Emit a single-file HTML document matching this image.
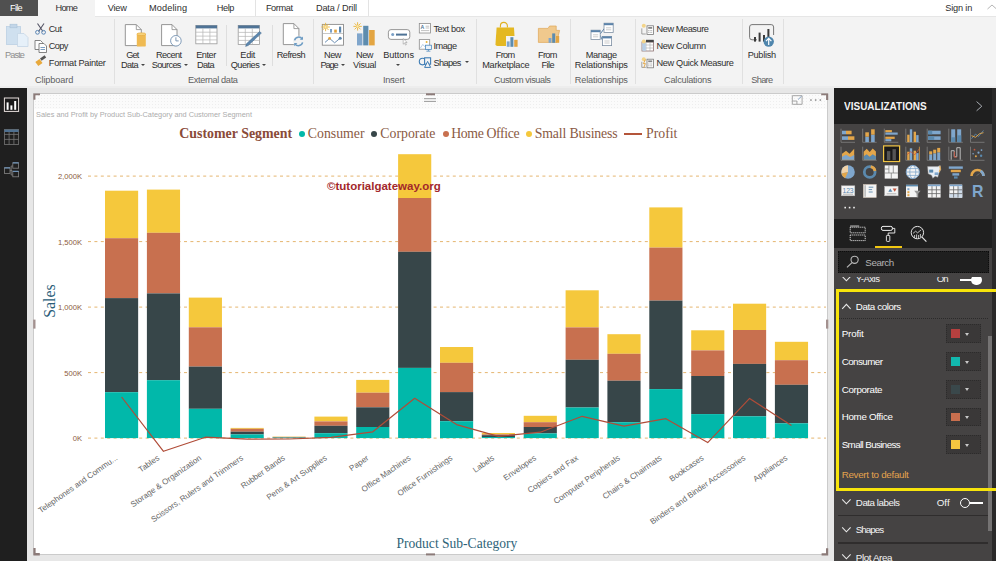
<!DOCTYPE html>
<html><head><meta charset="utf-8">
<style>
*{box-sizing:border-box;margin:0;padding:0}
html,body{width:996px;height:561px;overflow:hidden;background:#e6e6e6;font-family:"Liberation Sans",sans-serif;}
.abs{position:absolute}
#tabs{position:absolute;left:0;top:0;width:996px;height:16px;background:#fff}
#ribbon{position:absolute;left:0;top:16px;width:996px;height:72px;background:#f3f3f3;border-bottom:2px solid #ededed}
#side{position:absolute;left:0;top:88px;width:27px;height:473px;background:#1f1f1f}
#canvas{position:absolute;left:27px;top:88px;width:807px;height:473px;background:#e7e7e7}
#visual{position:absolute;left:33px;top:93px;width:795px;height:462px;background:#fff;border:1px solid #cbcbcb}
#panel{position:absolute;left:834px;top:88px;width:162px;height:473px;background:#454343;overflow:hidden}
.t{position:absolute;white-space:nowrap;line-height:1}
.rt{position:absolute;white-space:nowrap;line-height:1;font-size:10.2px;color:#333}
.rg{position:absolute;white-space:nowrap;line-height:1;font-size:10.2px;color:#555}
.sep{position:absolute;width:1px;background:#dcdcdc;top:22px;height:60px}
</style></head><body>
<div id="tabs">
  <div class="abs" style="left:0;top:0;width:37.6px;height:16px;background-color:#505050;background-image:radial-gradient(#3c3c3c 0.55px,transparent 0.65px);background-size:2px 2px"></div>
  <div class="abs" style="left:37.6px;top:0;width:57.8px;height:17px;background:#f3f3f3"></div>
</div>
<div id="ribbon"></div>
<div class="abs" style="left:95.4px;top:16px;width:901px;height:1px;background:#e6e6e6"></div>
<div class="t" style="left:10.0px;top:4.2px;font-size:9.2px;letter-spacing:-0.71px;color:#fff;font-family:'Liberation Sans',sans-serif;">File</div>
<div class="t" style="left:55.6px;top:4.2px;font-size:9.2px;letter-spacing:-0.75px;color:#2e2e2e;font-family:'Liberation Sans',sans-serif;">Home</div>
<div class="t" style="left:107.8px;top:4.2px;font-size:9.2px;letter-spacing:-0.22px;color:#2e2e2e;font-family:'Liberation Sans',sans-serif;">View</div>
<div class="t" style="left:149.0px;top:4.2px;font-size:9.2px;letter-spacing:0.11px;color:#2e2e2e;font-family:'Liberation Sans',sans-serif;">Modeling</div>
<div class="t" style="left:216.7px;top:4.2px;font-size:9.2px;letter-spacing:-0.37px;color:#2e2e2e;font-family:'Liberation Sans',sans-serif;">Help</div>
<div class="t" style="left:265.9px;top:4.2px;font-size:9.2px;letter-spacing:-0.41px;color:#2e2e2e;font-family:'Liberation Sans',sans-serif;">Format</div>
<div class="t" style="left:315.9px;top:4.2px;font-size:9.2px;letter-spacing:-0.15px;color:#2e2e2e;font-family:'Liberation Sans',sans-serif;">Data / Drill</div>
<div class="t" style="left:945.2px;top:4.2px;font-size:9.2px;letter-spacing:-0.17px;color:#2e2e2e;font-family:'Liberation Sans',sans-serif;">Sign in</div>
<div class="abs" style="left:255px;top:0;width:1px;height:16px;background:#e3e3e3"></div>
<div class="abs" style="left:368px;top:0;width:1px;height:16px;background:#e3e3e3"></div>
<svg class="abs" style="left:986px;top:3px" width="10" height="8" viewBox="0 0 10 8"><path d="M1.5 6 L6 2 L10.5 6" fill="none" stroke="#b5b5b5" stroke-width="1"/></svg>
<div class="t" style="left:5.1px;top:51.0px;font-size:9.2px;letter-spacing:-0.91px;color:#8e8e8e;font-family:'Liberation Sans',sans-serif;">Paste</div>
<div class="t" style="left:48.8px;top:24.9px;font-size:9.2px;letter-spacing:-0.56px;color:#2e2e2e;font-family:'Liberation Sans',sans-serif;">Cut</div>
<div class="t" style="left:48.8px;top:42.0px;font-size:9.2px;letter-spacing:-0.63px;color:#2e2e2e;font-family:'Liberation Sans',sans-serif;">Copy</div>
<div class="t" style="left:48.8px;top:58.6px;font-size:9.2px;letter-spacing:-0.28px;color:#2e2e2e;font-family:'Liberation Sans',sans-serif;">Format Painter</div>
<div class="t" style="left:35.0px;top:76.4px;font-size:9.2px;letter-spacing:-0.12px;color:#5e5e5e;font-family:'Liberation Sans',sans-serif;">Clipboard</div>
<div class="abs" style="left:114.3px;top:19px;width:1px;height:65px;background:#e0e0e0"></div>
<div class="t" style="left:126.3px;top:51.0px;font-size:9.2px;letter-spacing:-0.86px;color:#2e2e2e;font-family:'Liberation Sans',sans-serif;">Get</div>
<div class="t" style="left:121.0px;top:61.0px;font-size:9.2px;letter-spacing:-0.58px;color:#2e2e2e;font-family:'Liberation Sans',sans-serif;">Data</div>
<div class="abs" style="left:141.2px;top:63.8px;width:0;height:0;border-left:2.2px solid transparent;border-right:2.2px solid transparent;border-top:2.6px solid #444"></div>
<div class="t" style="left:156.1px;top:51.0px;font-size:9.2px;letter-spacing:-0.61px;color:#2e2e2e;font-family:'Liberation Sans',sans-serif;">Recent</div>
<div class="t" style="left:151.7px;top:61.0px;font-size:9.2px;letter-spacing:-0.66px;color:#2e2e2e;font-family:'Liberation Sans',sans-serif;">Sources</div>
<div class="abs" style="left:184.0px;top:63.8px;width:0;height:0;border-left:2.2px solid transparent;border-right:2.2px solid transparent;border-top:2.6px solid #444"></div>
<div class="t" style="left:196.2px;top:51.0px;font-size:9.2px;letter-spacing:-0.47px;color:#2e2e2e;font-family:'Liberation Sans',sans-serif;">Enter</div>
<div class="t" style="left:196.9px;top:61.0px;font-size:9.2px;letter-spacing:-0.54px;color:#2e2e2e;font-family:'Liberation Sans',sans-serif;">Data</div>
<div class="abs" style="left:225.8px;top:24.7px;width:1px;height:41px;background:#dedede"></div>
<div class="t" style="left:240.3px;top:51.0px;font-size:9.2px;letter-spacing:-0.25px;color:#2e2e2e;font-family:'Liberation Sans',sans-serif;">Edit</div>
<div class="t" style="left:230.7px;top:61.0px;font-size:9.2px;letter-spacing:-0.52px;color:#2e2e2e;font-family:'Liberation Sans',sans-serif;">Queries</div>
<div class="abs" style="left:262.0px;top:63.8px;width:0;height:0;border-left:2.2px solid transparent;border-right:2.2px solid transparent;border-top:2.6px solid #444"></div>
<div class="abs" style="left:272.1px;top:24.7px;width:1px;height:41px;background:#dedede"></div>
<div class="t" style="left:276.8px;top:51.0px;font-size:9.2px;letter-spacing:-0.57px;color:#2e2e2e;font-family:'Liberation Sans',sans-serif;">Refresh</div>
<div class="t" style="left:188.0px;top:76.4px;font-size:9.2px;letter-spacing:-0.35px;color:#5e5e5e;font-family:'Liberation Sans',sans-serif;">External data</div>
<div class="abs" style="left:313.3px;top:19px;width:1px;height:65px;background:#e0e0e0"></div>
<div class="t" style="left:324.0px;top:51.0px;font-size:9.2px;letter-spacing:-0.50px;color:#2e2e2e;font-family:'Liberation Sans',sans-serif;">New</div>
<div class="t" style="left:320.4px;top:61.0px;font-size:9.2px;letter-spacing:-1.06px;color:#2e2e2e;font-family:'Liberation Sans',sans-serif;">Page</div>
<div class="abs" style="left:341.2px;top:63.8px;width:0;height:0;border-left:2.2px solid transparent;border-right:2.2px solid transparent;border-top:2.6px solid #444"></div>
<div class="t" style="left:356.1px;top:51.0px;font-size:9.2px;letter-spacing:-0.50px;color:#2e2e2e;font-family:'Liberation Sans',sans-serif;">New</div>
<div class="t" style="left:353.0px;top:61.0px;font-size:9.2px;letter-spacing:-0.30px;color:#2e2e2e;font-family:'Liberation Sans',sans-serif;">Visual</div>
<div class="t" style="left:383.3px;top:51.0px;font-size:9.2px;letter-spacing:-0.08px;color:#2e2e2e;font-family:'Liberation Sans',sans-serif;">Buttons</div>
<div class="abs" style="left:396.2px;top:63.8px;width:0;height:0;border-left:2.2px solid transparent;border-right:2.2px solid transparent;border-top:2.6px solid #444"></div>
<div class="t" style="left:433.4px;top:24.9px;font-size:9.2px;letter-spacing:-0.37px;color:#2e2e2e;font-family:'Liberation Sans',sans-serif;">Text box</div>
<div class="t" style="left:433.4px;top:42.0px;font-size:9.2px;letter-spacing:-0.47px;color:#2e2e2e;font-family:'Liberation Sans',sans-serif;">Image</div>
<div class="t" style="left:433.4px;top:58.6px;font-size:9.2px;letter-spacing:-0.62px;color:#2e2e2e;font-family:'Liberation Sans',sans-serif;">Shapes</div>
<div class="abs" style="left:465.3px;top:61.4px;width:0;height:0;border-left:2.2px solid transparent;border-right:2.2px solid transparent;border-top:2.6px solid #444"></div>
<div class="t" style="left:382.9px;top:76.4px;font-size:9.2px;letter-spacing:-0.20px;color:#5e5e5e;font-family:'Liberation Sans',sans-serif;">Insert</div>
<div class="abs" style="left:476.4px;top:19px;width:1px;height:65px;background:#e0e0e0"></div>
<div class="t" style="left:495.8px;top:51.0px;font-size:9.2px;letter-spacing:-0.69px;color:#2e2e2e;font-family:'Liberation Sans',sans-serif;">From</div>
<div class="t" style="left:482.2px;top:61.0px;font-size:9.2px;letter-spacing:-0.26px;color:#2e2e2e;font-family:'Liberation Sans',sans-serif;">Marketplace</div>
<div class="t" style="left:538.0px;top:51.0px;font-size:9.2px;letter-spacing:-0.69px;color:#2e2e2e;font-family:'Liberation Sans',sans-serif;">From</div>
<div class="t" style="left:541.4px;top:61.0px;font-size:9.2px;letter-spacing:-0.57px;color:#2e2e2e;font-family:'Liberation Sans',sans-serif;">File</div>
<div class="t" style="left:494.0px;top:76.4px;font-size:9.2px;letter-spacing:-0.41px;color:#5e5e5e;font-family:'Liberation Sans',sans-serif;">Custom visuals</div>
<div class="abs" style="left:569.5px;top:19px;width:1px;height:65px;background:#e0e0e0"></div>
<div class="t" style="left:585.8px;top:51.0px;font-size:9.2px;letter-spacing:-0.37px;color:#2e2e2e;font-family:'Liberation Sans',sans-serif;">Manage</div>
<div class="t" style="left:574.8px;top:61.0px;font-size:9.2px;letter-spacing:-0.17px;color:#2e2e2e;font-family:'Liberation Sans',sans-serif;">Relationships</div>
<div class="t" style="left:574.8px;top:76.4px;font-size:9.2px;letter-spacing:-0.17px;color:#5e5e5e;font-family:'Liberation Sans',sans-serif;">Relationships</div>
<div class="abs" style="left:635.3px;top:19px;width:1px;height:65px;background:#e0e0e0"></div>
<div class="t" style="left:656.5px;top:24.9px;font-size:9.2px;letter-spacing:-0.42px;color:#2e2e2e;font-family:'Liberation Sans',sans-serif;">New Measure</div>
<div class="t" style="left:656.5px;top:42.0px;font-size:9.2px;letter-spacing:-0.33px;color:#2e2e2e;font-family:'Liberation Sans',sans-serif;">New Column</div>
<div class="t" style="left:656.5px;top:58.6px;font-size:9.2px;letter-spacing:-0.33px;color:#2e2e2e;font-family:'Liberation Sans',sans-serif;">New Quick Measure</div>
<div class="t" style="left:664.1px;top:76.4px;font-size:9.2px;letter-spacing:-0.24px;color:#5e5e5e;font-family:'Liberation Sans',sans-serif;">Calculations</div>
<div class="abs" style="left:742.4px;top:19px;width:1px;height:65px;background:#e0e0e0"></div>
<div class="t" style="left:747.7px;top:51.0px;font-size:9.2px;letter-spacing:-0.28px;color:#2e2e2e;font-family:'Liberation Sans',sans-serif;">Publish</div>
<div class="t" style="left:751.3px;top:76.4px;font-size:9.2px;letter-spacing:-0.69px;color:#5e5e5e;font-family:'Liberation Sans',sans-serif;">Share</div>
<div class="abs" style="left:783.4px;top:19px;width:1px;height:65px;background:#e0e0e0"></div>
<svg class="abs" style="left:0;top:0" width="996" height="90" viewBox="0 0 996 90" shape-rendering="auto">
<rect x="6.5" y="26.5" width="14" height="18" fill="#cfe0ef" stroke="#bcd0e3" stroke-width="0.8"/>
<rect x="10" y="24.2" width="7" height="3.6" fill="#c3d6e8" stroke="#a9c2d8" stroke-width="0.6"/>
<path d="M17.5 33.5 h6.5 l4 4 v9 h-10.5z" fill="#e6f0f9" stroke="#c5d6e6" stroke-width="0.8"/>
<path d="M37.5 23.5 L43 31.5 M44 23.5 L38.5 31.5" stroke="#556" stroke-width="1.1" fill="none"/>
<circle cx="37.5" cy="32.3" r="1.9" fill="none" stroke="#5b86b5" stroke-width="1"/><circle cx="43.6" cy="32.3" r="1.9" fill="none" stroke="#5b86b5" stroke-width="1"/>
<path d="M35 40.5 h5.5 l2 2 v7 h-7.5z" fill="#fdfdfd" stroke="#777" stroke-width="0.9"/>
<path d="M39 43.5 h5 l2.5 2.5 v6.5 h-7.5z" fill="#fdfdfd" stroke="#777" stroke-width="0.9"/>
<path d="M40.5 47.5 h4.5 M40.5 49.5 h4.5" stroke="#5b86b5" stroke-width="0.8"/>
<path d="M35.3 62 l4.2 -3 l3 4 l-4.2 3z" fill="#e8a93c"/><path d="M40 58.5 l4.6 -3.2 l1.6 2.2 l-4.6 3.2z" fill="#555"/>
<path d="M125.3 24.6 h11 l5 5 v16 h-16z" fill="#fff" stroke="#8a8a8a" stroke-width="0.9"/><path d="M136.3 24.6 v5 h5" fill="none" stroke="#8a8a8a" stroke-width="0.8"/>
<rect x="136.8" y="33.6" width="9" height="13" rx="1.2" fill="#efba52"/><ellipse cx="141.3" cy="34.2" rx="4.5" ry="1.4" fill="#f6d27c" stroke="#e2a12e" stroke-width="0.5"/>
<path d="M161.6 24.6 h10.4 l5 5 v16 h-15.4z" fill="#fff" stroke="#8a8a8a" stroke-width="0.9"/><path d="M172.0 24.6 v5 h5" fill="none" stroke="#8a8a8a" stroke-width="0.8"/>
<circle cx="175.9" cy="40.8" r="5.3" fill="#fff" stroke="#7f9bb8" stroke-width="1"/><path d="M175.9 37.3 v3.6 h2.8" fill="none" stroke="#6f8cab" stroke-width="0.9"/>
<rect x="195.8" y="25.4" width="21.2" height="18.4" fill="#fff" stroke="#9a9a9a" stroke-width="0.8"/><rect x="195.8" y="25.4" width="21.2" height="3" fill="#4f7396"/><path d="M195.8 32.2 h21.2" stroke="#b5b5b5" stroke-width="0.7"/><path d="M195.8 36.1 h21.2" stroke="#b5b5b5" stroke-width="0.7"/><path d="M195.8 39.9 h21.2" stroke="#b5b5b5" stroke-width="0.7"/><path d="M202.9 28.4 v15.399999999999999" stroke="#b5b5b5" stroke-width="0.7"/><path d="M209.9 28.4 v15.399999999999999" stroke="#b5b5b5" stroke-width="0.7"/>
<rect x="238.2" y="25.4" width="21.2" height="19" fill="#fff" stroke="#9a9a9a" stroke-width="0.8"/><rect x="238.2" y="25.4" width="21.2" height="3" fill="#4f7396"/><path d="M238.2 32.4 h21.2" stroke="#b5b5b5" stroke-width="0.7"/><path d="M238.2 36.4 h21.2" stroke="#b5b5b5" stroke-width="0.7"/><path d="M238.2 40.4 h21.2" stroke="#b5b5b5" stroke-width="0.7"/><path d="M245.3 28.4 v16" stroke="#b5b5b5" stroke-width="0.7"/><path d="M252.3 28.4 v16" stroke="#b5b5b5" stroke-width="0.7"/>
<path d="M259.6 31.5 l1.8 1.6 l-13.2 12.4 l-2.6 0.9 l0.8 -2.6z" fill="#5c86ad" stroke="#456c91" stroke-width="0.5"/>
<path d="M283.3 23.6 h10.6 l5 5 v16 h-15.6z" fill="#fff" stroke="#8a8a8a" stroke-width="0.9"/><path d="M293.90000000000003 23.6 v5 h5" fill="none" stroke="#8a8a8a" stroke-width="0.8"/>
<circle cx="298.6" cy="41.4" r="5.6" fill="#f3f3f3"/><path d="M294.6 40.4 a4.2 4.2 0 0 1 7.6 -1.4" fill="none" stroke="#6d9cc4" stroke-width="1.5"/><path d="M302.6 42.4 a4.2 4.2 0 0 1 -7.6 1.4" fill="none" stroke="#6d9cc4" stroke-width="1.5"/><path d="M303 36.5 v3.2 h-3.2z M294.2 46.3 v-3.2 h3.2z" fill="#6d9cc4"/>
<rect x="322.3" y="24.4" width="21.2" height="20.8" fill="#fff" stroke="#8c8c8c" stroke-width="0.9"/>
<path d="M323 33.5 h20" stroke="#b0b0b0" stroke-width="0.7"/>
<rect x="330" y="29" width="2" height="3.6" fill="#7aa0c6"/><rect x="334.2" y="29.6" width="2.6" height="3" fill="#e2a13a"/><rect x="339" y="26.6" width="2.2" height="6" fill="#5c86ad"/>
<path d="M325 42.4 l4.6 -4 l5 4.4 l5.6 -4.6" fill="none" stroke="#6c8fb3" stroke-width="1"/><circle cx="329.6" cy="38.4" r="1.4" fill="#e2a13a"/><circle cx="340.2" cy="38.2" r="1.5" fill="#5c86ad"/>
<path d="M327.0 27.0 L329.8 27.0 M326.6 28.0 L328.6 30.0 M325.6 28.4 L325.6 31.2 M324.6 28.0 L322.6 30.0 M324.2 27.0 L321.4 27.0 M324.6 26.0 L322.6 24.0 M325.6 25.6 L325.6 22.8 M326.6 26.0 L328.6 24.0 " stroke="#e9b43a" stroke-width="0.9" fill="none"/><circle cx="325.6" cy="27" r="1.5" fill="#fbe6a6" stroke="#e9b43a" stroke-width="0.5"/>
<rect x="357" y="33.4" width="5.4" height="12" fill="#80a6cc"/><rect x="363.2" y="25.8" width="5.2" height="19.6" fill="#5d8cae"/><rect x="369.1" y="30" width="5.6" height="15.4" fill="#e3a542"/>
<path d="M359.0 26.4 L361.8 26.4 M358.6 27.4 L360.6 29.4 M357.6 27.8 L357.6 30.6 M356.6 27.4 L354.6 29.4 M356.2 26.4 L353.4 26.4 M356.6 25.4 L354.6 23.4 M357.6 25.0 L357.6 22.2 M358.6 25.4 L360.6 23.4 " stroke="#e9b43a" stroke-width="0.9" fill="none"/><circle cx="357.6" cy="26.4" r="1.5" fill="#fbe6a6" stroke="#e9b43a" stroke-width="0.5"/>
<rect x="388.4" y="29.6" width="21.4" height="9.8" rx="2.6" fill="#fff" stroke="#8c8c8c" stroke-width="0.9"/><circle cx="392.7" cy="34.6" r="1.5" fill="#7aa0c6"/><rect x="396" y="33.6" width="11" height="2" fill="#4f7396"/>
<path d="M403.2 38.6 l0 5.6 l1.3 -1.3 l1 2.2 l0.9 -0.4 l-1 -2.2 l1.8 0z" fill="#fff" stroke="#888" stroke-width="0.5"/>
<rect x="419.3" y="23.4" width="11.2" height="9.6" fill="#fff" stroke="#8c8c8c" stroke-width="0.8"/><text x="420.6" y="29.2" font-size="5.2" font-family="Liberation Sans" font-weight="bold" fill="#4f7396">A</text><path d="M425.6 26.2 h3.6 M425.6 28 h3.6 M421 30.6 h8.2" stroke="#999" stroke-width="0.6"/>
<rect x="419.3" y="39.6" width="10.4" height="9.6" fill="#fff" stroke="#8c8c8c" stroke-width="0.8"/><circle cx="426.6" cy="42" r="1" fill="#e9b43a"/><path d="M420.4 48 l2.4 -3.6 l2 2.4" fill="none" stroke="#9db9d4" stroke-width="0.7"/><rect x="425.4" y="45.2" width="6" height="4.2" fill="#eaf2fa" stroke="#4f8bc0" stroke-width="0.8"/><path d="M428.4 49.4 v1.6 M426.4 51.2 h4" stroke="#4f8bc0" stroke-width="0.8"/>
<circle cx="422.6" cy="61.6" r="3.3" fill="none" stroke="#3f7db5" stroke-width="1.1"/><rect x="424.6" y="57.8" width="6" height="6.4" fill="#f3f3f3" stroke="#3f7db5" stroke-width="1.1"/><path d="M427.6 61.4 l-3 6 h6z" fill="#f3f3f3" stroke="#3f7db5" stroke-width="1"/>
<path d="M500.4 27.6 v-1.6 a3.5 3.6 0 0 1 7 0 v1.6" fill="none" stroke="#e0b020" stroke-width="1.1"/>
<path d="M496.6 27.4 h17.4 l1 16.6 q0 2 -2 2 h-15.6 q-2 0 -1.9 -2z" fill="#e4b822"/>
<rect x="506" y="36" width="12.6" height="11.4" fill="#f3f3f3"/><rect x="506.8" y="41.4" width="2.8" height="5.4" fill="#80a6cc"/><rect x="510.4" y="37.2" width="3" height="9.6" fill="#5d8cae"/><rect x="514.2" y="39.8" width="3.4" height="7" fill="#e3a542"/>
<path d="M538.4 42.4 v-14 h9.6 l1.6 -2.4 h6.6 v4.4 h3.4 l-3 12z" fill="#f0c98d" stroke="#e0a656" stroke-width="0.7"/>
<rect x="548.6" y="38" width="2.8" height="4.8" fill="#80a6cc"/><rect x="552.2" y="33.4" width="3" height="9.4" fill="#5d8cae"/><rect x="556" y="36" width="3.2" height="6.8" fill="#e3a542"/>
<path d="M600.2 34 l4 -5.4 M600.2 35.4 l2.4 5" stroke="#5b83aa" stroke-width="1"/>
<rect x="591" y="30.2" width="9.2" height="9.2" fill="#fff" stroke="#7d8fa3" stroke-width="0.8"/><rect x="591" y="30.2" width="9.2" height="2" fill="#5b83aa"/><path d="M593 34.8 h5.199999999999999 M593 36.8 h5.199999999999999" stroke="#aaa" stroke-width="0.6"/>
<rect x="604" y="23.2" width="9.2" height="9.2" fill="#fff" stroke="#7d8fa3" stroke-width="0.8"/><rect x="604" y="23.2" width="9.2" height="2" fill="#5b83aa"/><path d="M606 27.799999999999997 h5.199999999999999 M606 29.799999999999997 h5.199999999999999" stroke="#aaa" stroke-width="0.6"/>
<rect x="602.4" y="36.4" width="9.2" height="9.2" fill="#fff" stroke="#7d8fa3" stroke-width="0.8"/><rect x="602.4" y="36.4" width="9.2" height="2" fill="#5b83aa"/><path d="M604.4 41.0 h5.199999999999999 M604.4 43.0 h5.199999999999999" stroke="#aaa" stroke-width="0.6"/>
<path d="M641.8 28.4 v5.6 h4" fill="none" stroke="#8c8c8c" stroke-width="0.8"/><rect x="647.0" y="25.799999999999997" width="6.4" height="8.6" fill="#fff" stroke="#777" stroke-width="0.8"/><rect x="648.1999999999999" y="27.0" width="4" height="1.8" fill="#888"/><path d="M648.1999999999999 30.599999999999998 h4 M648.1999999999999 32.4 h4" stroke="#999" stroke-width="0.8" stroke-dasharray="1 0.5"/><circle cx="643.8" cy="25.799999999999997" r="2" fill="#f3d489"/>
<rect x="642" y="42" width="11.6" height="9" fill="#fff" stroke="#8c7070" stroke-width="0.8"/><rect x="646" y="39.8" width="7.8" height="2.4" fill="#444"/><path d="M642 45 h11.6 M642 48 h11.6 M646 42 v9 M650 42 v9" stroke="#aaa" stroke-width="0.6"/><rect x="642.4" y="42.4" width="3.4" height="8.4" fill="#b7cfe6"/><circle cx="643.8" cy="41.6" r="2" fill="#f3d489"/>
<path d="M641.8 61.8 v5.6 h4" fill="none" stroke="#8c8c8c" stroke-width="0.8"/><rect x="647.0" y="59.199999999999996" width="6.4" height="8.6" fill="#fff" stroke="#777" stroke-width="0.8"/><rect x="648.1999999999999" y="60.4" width="4" height="1.8" fill="#888"/><path d="M648.1999999999999 64.0 h4 M648.1999999999999 65.8 h4" stroke="#999" stroke-width="0.8" stroke-dasharray="1 0.5"/><circle cx="643.8" cy="59.199999999999996" r="2" fill="#f3d489"/>
<path d="M645.4 59.6 l-2 4 h2 l-1.6 4" fill="none" stroke="#e2a13a" stroke-width="0.9"/>
<path d="M757 39.8 h-5 q-2.4 0 -2.4 -2.4 v-10.4 q0 -2.4 2.4 -2.4 h19.2 q2.4 0 2.4 2.4 v8" fill="none" stroke="#777" stroke-width="1"/>
<rect x="754" y="37" width="2" height="4.6" fill="#3a3a3a"/><rect x="758.6" y="32.6" width="2" height="9" fill="#3a3a3a"/><rect x="763" y="35" width="2" height="6.6" fill="#3a3a3a"/><rect x="767.4" y="29" width="2" height="9" fill="#3a3a3a"/>
<circle cx="768.7" cy="41.6" r="5.2" fill="#4f86ad"/><path d="M768.7 45 v-6.4 M766 41.2 l2.7 -2.8 l2.7 2.8" fill="none" stroke="#fff" stroke-width="1.2"/>
</svg>
<div id="side"></div>
<div id="canvas"></div>
<div id="visual"></div>
<svg class="chart" width="996" height="561" viewBox="0 0 996 561" style="position:absolute;left:0;top:0">
<line x1="88" y1="438.1" x2="826" y2="438.1" stroke="#e5b670" stroke-width="1" stroke-dasharray="3 3.4"/>
<text x="82" y="441.1" text-anchor="end" font-size="7.6" fill="#8b5a3c" font-family="Liberation Sans, sans-serif">0K</text>
<line x1="88" y1="372.6" x2="826" y2="372.6" stroke="#e5b670" stroke-width="1" stroke-dasharray="3 3.4"/>
<text x="82" y="375.6" text-anchor="end" font-size="7.6" fill="#8b5a3c" font-family="Liberation Sans, sans-serif">500K</text>
<line x1="88" y1="307.1" x2="826" y2="307.1" stroke="#e5b670" stroke-width="1" stroke-dasharray="3 3.4"/>
<text x="82" y="310.1" text-anchor="end" font-size="7.6" fill="#8b5a3c" font-family="Liberation Sans, sans-serif">1,000K</text>
<line x1="88" y1="241.6" x2="826" y2="241.6" stroke="#e5b670" stroke-width="1" stroke-dasharray="3 3.4"/>
<text x="82" y="244.6" text-anchor="end" font-size="7.6" fill="#8b5a3c" font-family="Liberation Sans, sans-serif">1,500K</text>
<line x1="88" y1="176.1" x2="826" y2="176.1" stroke="#e5b670" stroke-width="1" stroke-dasharray="3 3.4"/>
<text x="82" y="179.1" text-anchor="end" font-size="7.6" fill="#8b5a3c" font-family="Liberation Sans, sans-serif">2,000K</text>
<rect x="105.0" y="190.7" width="33.15" height="47.5" fill="#f5c83c"/>
<rect x="105.0" y="238.2" width="33.15" height="59.9" fill="#c8704f"/>
<rect x="105.0" y="298.1" width="33.15" height="94.1" fill="#374649"/>
<rect x="105.0" y="392.2" width="33.15" height="45.9" fill="#01b8aa"/>
<rect x="146.9" y="189.6" width="33.15" height="43.2" fill="#f5c83c"/>
<rect x="146.9" y="232.8" width="33.15" height="60.6" fill="#c8704f"/>
<rect x="146.9" y="293.4" width="33.15" height="86.8" fill="#374649"/>
<rect x="146.9" y="380.2" width="33.15" height="57.9" fill="#01b8aa"/>
<rect x="188.8" y="297.6" width="33.15" height="29.7" fill="#f5c83c"/>
<rect x="188.8" y="327.3" width="33.15" height="39.3" fill="#c8704f"/>
<rect x="188.8" y="366.6" width="33.15" height="42.2" fill="#374649"/>
<rect x="188.8" y="408.8" width="33.15" height="29.3" fill="#01b8aa"/>
<rect x="230.6" y="427.9" width="33.15" height="0.9" fill="#f5c83c"/>
<rect x="230.6" y="428.8" width="33.15" height="2.9" fill="#c8704f"/>
<rect x="230.6" y="431.7" width="33.15" height="2.7" fill="#374649"/>
<rect x="230.6" y="434.4" width="33.15" height="3.7" fill="#01b8aa"/>
<rect x="272.5" y="436.6" width="33.15" height="0.3" fill="#f5c83c"/>
<rect x="272.5" y="436.9" width="33.15" height="0.4" fill="#c8704f"/>
<rect x="272.5" y="437.3" width="33.15" height="0.4" fill="#374649"/>
<rect x="272.5" y="437.7" width="33.15" height="0.4" fill="#01b8aa"/>
<rect x="314.4" y="416.6" width="33.15" height="4.8" fill="#f5c83c"/>
<rect x="314.4" y="421.4" width="33.15" height="4.4" fill="#c8704f"/>
<rect x="314.4" y="425.8" width="33.15" height="7.4" fill="#374649"/>
<rect x="314.4" y="433.2" width="33.15" height="4.9" fill="#01b8aa"/>
<rect x="356.2" y="379.9" width="33.15" height="12.8" fill="#f5c83c"/>
<rect x="356.2" y="392.7" width="33.15" height="14.6" fill="#c8704f"/>
<rect x="356.2" y="407.3" width="33.15" height="19.7" fill="#374649"/>
<rect x="356.2" y="427.0" width="33.15" height="11.1" fill="#01b8aa"/>
<rect x="398.1" y="154.2" width="33.15" height="43.8" fill="#f5c83c"/>
<rect x="398.1" y="198.0" width="33.15" height="53.8" fill="#c8704f"/>
<rect x="398.1" y="251.8" width="33.15" height="116.1" fill="#374649"/>
<rect x="398.1" y="367.9" width="33.15" height="70.2" fill="#01b8aa"/>
<rect x="440.0" y="347.0" width="33.15" height="15.8" fill="#f5c83c"/>
<rect x="440.0" y="362.8" width="33.15" height="29.3" fill="#c8704f"/>
<rect x="440.0" y="392.1" width="33.15" height="29.1" fill="#374649"/>
<rect x="440.0" y="421.2" width="33.15" height="16.9" fill="#01b8aa"/>
<rect x="481.8" y="433.0" width="33.15" height="1.3" fill="#f5c83c"/>
<rect x="481.8" y="434.3" width="33.15" height="0.9" fill="#c8704f"/>
<rect x="481.8" y="435.2" width="33.15" height="1.8" fill="#374649"/>
<rect x="481.8" y="437.0" width="33.15" height="1.1" fill="#01b8aa"/>
<rect x="523.7" y="415.8" width="33.15" height="6.4" fill="#f5c83c"/>
<rect x="523.7" y="422.2" width="33.15" height="4.8" fill="#c8704f"/>
<rect x="523.7" y="427.0" width="33.15" height="6.4" fill="#374649"/>
<rect x="523.7" y="433.4" width="33.15" height="4.7" fill="#01b8aa"/>
<rect x="565.6" y="290.3" width="33.15" height="37.1" fill="#f5c83c"/>
<rect x="565.6" y="327.4" width="33.15" height="32.4" fill="#c8704f"/>
<rect x="565.6" y="359.8" width="33.15" height="47.7" fill="#374649"/>
<rect x="565.6" y="407.5" width="33.15" height="30.6" fill="#01b8aa"/>
<rect x="607.4" y="334.2" width="33.15" height="19.6" fill="#f5c83c"/>
<rect x="607.4" y="353.8" width="33.15" height="26.9" fill="#c8704f"/>
<rect x="607.4" y="380.7" width="33.15" height="41.5" fill="#374649"/>
<rect x="607.4" y="422.2" width="33.15" height="15.9" fill="#01b8aa"/>
<rect x="649.3" y="207.4" width="33.15" height="40.2" fill="#f5c83c"/>
<rect x="649.3" y="247.6" width="33.15" height="53.0" fill="#c8704f"/>
<rect x="649.3" y="300.6" width="33.15" height="88.5" fill="#374649"/>
<rect x="649.3" y="389.1" width="33.15" height="49.0" fill="#01b8aa"/>
<rect x="691.2" y="330.3" width="33.15" height="20.1" fill="#f5c83c"/>
<rect x="691.2" y="350.4" width="33.15" height="25.6" fill="#c8704f"/>
<rect x="691.2" y="376.0" width="33.15" height="38.1" fill="#374649"/>
<rect x="691.2" y="414.1" width="33.15" height="24.0" fill="#01b8aa"/>
<rect x="733.0" y="303.7" width="33.15" height="26.3" fill="#f5c83c"/>
<rect x="733.0" y="330.0" width="33.15" height="33.9" fill="#c8704f"/>
<rect x="733.0" y="363.9" width="33.15" height="52.4" fill="#374649"/>
<rect x="733.0" y="416.3" width="33.15" height="21.8" fill="#01b8aa"/>
<rect x="774.9" y="341.8" width="33.15" height="18.4" fill="#f5c83c"/>
<rect x="774.9" y="360.2" width="33.15" height="24.6" fill="#c8704f"/>
<rect x="774.9" y="384.8" width="33.15" height="38.5" fill="#374649"/>
<rect x="774.9" y="423.3" width="33.15" height="14.8" fill="#01b8aa"/>
<polyline points="121.6,397.0 163.5,451.3 205.4,437.2 247.2,439.1 289.1,439.0 331.0,437.3 372.8,431.8 414.7,398.3 456.6,424.6 498.4,436.4 540.3,432.2 582.2,416.3 624.0,426.2 665.9,418.7 707.7,442.6 749.6,398.4 791.5,425.6" fill="none" stroke="#b04c38" stroke-width="1.2" stroke-linejoin="round"/>
<text transform="translate(118.1,459.2) rotate(-35)" text-anchor="end" font-size="8.1" fill="#666" font-family="Liberation Sans, sans-serif">Telephones and Commu...</text>
<text transform="translate(160.0,459.2) rotate(-35)" text-anchor="end" font-size="8.1" fill="#666" font-family="Liberation Sans, sans-serif">Tables</text>
<text transform="translate(201.9,459.2) rotate(-35)" text-anchor="end" font-size="8.1" fill="#666" font-family="Liberation Sans, sans-serif">Storage &amp; Organization</text>
<text transform="translate(243.7,459.2) rotate(-35)" text-anchor="end" font-size="8.1" fill="#666" font-family="Liberation Sans, sans-serif">Scissors, Rulers and Trimmers</text>
<text transform="translate(285.6,459.2) rotate(-35)" text-anchor="end" font-size="8.1" fill="#666" font-family="Liberation Sans, sans-serif">Rubber Bands</text>
<text transform="translate(327.5,459.2) rotate(-35)" text-anchor="end" font-size="8.1" fill="#666" font-family="Liberation Sans, sans-serif">Pens &amp; Art Supplies</text>
<text transform="translate(369.3,459.2) rotate(-35)" text-anchor="end" font-size="8.1" fill="#666" font-family="Liberation Sans, sans-serif">Paper</text>
<text transform="translate(411.2,459.2) rotate(-35)" text-anchor="end" font-size="8.1" fill="#666" font-family="Liberation Sans, sans-serif">Office Machines</text>
<text transform="translate(453.1,459.2) rotate(-35)" text-anchor="end" font-size="8.1" fill="#666" font-family="Liberation Sans, sans-serif">Office Furnishings</text>
<text transform="translate(494.9,459.2) rotate(-35)" text-anchor="end" font-size="8.1" fill="#666" font-family="Liberation Sans, sans-serif">Labels</text>
<text transform="translate(536.8,459.2) rotate(-35)" text-anchor="end" font-size="8.1" fill="#666" font-family="Liberation Sans, sans-serif">Envelopes</text>
<text transform="translate(578.7,459.2) rotate(-35)" text-anchor="end" font-size="8.1" fill="#666" font-family="Liberation Sans, sans-serif">Copiers and Fax</text>
<text transform="translate(620.5,459.2) rotate(-35)" text-anchor="end" font-size="8.1" fill="#666" font-family="Liberation Sans, sans-serif">Computer Peripherals</text>
<text transform="translate(662.4,459.2) rotate(-35)" text-anchor="end" font-size="8.1" fill="#666" font-family="Liberation Sans, sans-serif">Chairs &amp; Chairmats</text>
<text transform="translate(704.2,459.2) rotate(-35)" text-anchor="end" font-size="8.1" fill="#666" font-family="Liberation Sans, sans-serif">Bookcases</text>
<text transform="translate(746.1,459.2) rotate(-35)" text-anchor="end" font-size="8.1" fill="#666" font-family="Liberation Sans, sans-serif">Binders and Binder Accessories</text>
<text transform="translate(788.0,459.2) rotate(-35)" text-anchor="end" font-size="8.1" fill="#666" font-family="Liberation Sans, sans-serif">Appliances</text>
</svg>

<!-- visual header dotted band -->
<div class="abs" style="left:34px;top:94px;width:793px;height:14.5px;background-color:#fbfbfb;background-image:radial-gradient(#eeeeee 0.6px,transparent 0.7px);background-size:3px 3px"></div>
<div class="t" style="left:36px;top:111px;font-size:7.35px;color:#acacac">Sales and Profit by Product Sub-Category and Customer Segment</div>
<!-- legend -->
<div class="t" style="left:179.3px;top:127px;font-family:'Liberation Serif',serif;font-weight:bold;font-size:13.9px;color:#8a4b38">Customer Segment</div>
<div class="abs" style="left:298.6px;top:131px;width:6px;height:6px;border-radius:50%;background:#01b8aa"></div>
<div class="t" id="lg1" style="left:307.8px;top:127px;font-family:'Liberation Serif',serif;font-size:13.8px;color:#8a5a44">Consumer</div>
<div class="abs" style="left:371.4px;top:131px;width:6px;height:6px;border-radius:50%;background:#374649"></div>
<div class="t" id="lg2" style="left:380.3px;top:127px;font-family:'Liberation Serif',serif;font-size:13.8px;color:#8a5a44">Corporate</div>
<div class="abs" style="left:442.5px;top:131px;width:6px;height:6px;border-radius:50%;background:#c8704f"></div>
<div class="t" id="lg3" style="left:451.2px;top:127px;font-family:'Liberation Serif',serif;font-size:13.8px;letter-spacing:-0.37px;color:#8a5a44">Home Office</div>
<div class="abs" style="left:525.6px;top:131px;width:6px;height:6px;border-radius:50%;background:#f5c83c"></div>
<div class="t" id="lg4" style="left:534.7px;top:127px;font-family:'Liberation Serif',serif;font-size:13.8px;letter-spacing:-0.13px;color:#8a5a44">Small Business</div>
<div class="abs" style="left:624px;top:133.4px;width:18px;height:1.3px;background:#b4553a"></div>
<div class="t" id="lg5" style="left:646px;top:127px;font-family:'Liberation Serif',serif;font-size:13.8px;color:#8a5a44">Profit</div>
<div class="t" style="left:327px;top:181.4px;font-weight:bold;font-size:11.5px;color:#a3282b">©tutorialgateway.org</div>
<!-- axis titles -->
<div class="t" style="left:396.5px;top:536.5px;font-family:'Liberation Serif',serif;font-size:13.55px;color:#2e6378">Product Sub-Category</div>
<div class="t" style="left:50px;top:301px;font-family:'Liberation Serif',serif;font-size:15.9px;color:#2a5d78;transform:translate(-50%,-50%) rotate(-90deg);transform-origin:center">Sales</div>


<!-- visual handles & header icons -->
<svg class="abs" style="left:0;top:0" width="996" height="561" viewBox="0 0 996 561">
 <g fill="#8c7b79">
  <path d="M33.4 93.4 h6.6 v1.8 h-4.6 v4.6 h-2z"/>
  <path d="M828.2 93.4 h-7 v1.8 h4.9 v4.8 h2.1z"/>
  <path d="M33.4 555.4 h6.4 v-2.4 h-4.2 v-5 h-2.2z"/>
  <path d="M828.2 555.4 h-6.6 v-2.2 h4.4 v-5 h2.2z"/>
  <rect x="426" y="93.3" width="9" height="2"/>
  <rect x="426" y="553.4" width="9" height="2"/>
  <rect x="33.2" y="319.6" width="2.3" height="9" fill="#a3918f"/>
  <rect x="826" y="319.6" width="2.3" height="9" fill="#a3918f"/>
 </g>
 <path d="M424 98.7 h12 M424 101.4 h12" stroke="#9a9a9a" stroke-width="1"/>
 <path d="M792.3 95.7 h9.8 v8.6 h-9.8z" fill="none" stroke="#9c9c9c" stroke-width="0.9"/>
 <path d="M792.3 101 h4.6 v3.2" fill="none" stroke="#9c9c9c" stroke-width="0.9"/>
 <path d="M798 99.6 l3.6 -3.4" stroke="#7d9cc0" stroke-width="0.9"/>
 <g fill="#8a8a8a"><rect x="810.2" y="99.3" width="1.5" height="1.5"/><rect x="814.9" y="99.3" width="1.5" height="1.5"/><rect x="819.6" y="99.3" width="1.5" height="1.5"/></g>
 <!-- sidebar icons -->
 <rect x="4.4" y="98" width="14.2" height="13.4" fill="#1a1a1a" stroke="#e8e0dd" stroke-width="1"/>
 <rect x="6.6" y="102.4" width="2" height="7.4" fill="#fff"/><rect x="10.4" y="105.4" width="2" height="4.4" fill="#fff"/><rect x="14.2" y="101" width="2" height="8.8" fill="#fff"/>
 <g stroke="#767676" stroke-width="0.8" fill="none">
  <rect x="4.4" y="129.6" width="14.2" height="14.8"/>
  <path d="M4.4 134.4 h14.2 M4.4 139.4 h14.2 M9.1 132 v12.4 M13.9 132 v12.4"/>
 </g>
 <rect x="4.4" y="129.6" width="14.2" height="2.4" fill="#4f7090"/>
 <g stroke="#858585" stroke-width="0.8" fill="#1f1f1f">
  <path d="M10 170.6 h2.4 M11.2 166 v9 M11.2 166 h1.6 M11.2 175 h1.6" fill="none"/>
  <rect x="4.4" y="167.8" width="5.6" height="5.6"/>
  <rect x="12.8" y="162.8" width="5.8" height="5.4"/>
  <rect x="12.8" y="171.4" width="5.8" height="5.4"/>
 </g>
 <path d="M4.4 167.8 h5.6 M12.8 162.8 h5.8 M12.8 171.4 h5.8" stroke="#6f93b8" stroke-width="1.2"/>
</svg>
<div id="panel"></div>
<div class="abs" style="left:834.0px;top:88.0px;width:162.0px;height:35.8px;background:#1f1f1f;"></div>
<div class="abs" style="left:991.6px;top:88.0px;width:4.4px;height:473.0px;background:#2a2929;"></div>
<div class="t" style="left:844.2px;top:101.3px;font-size:11.4px;font-weight:bold;color:#f4f4f4;transform-origin:0 50%;transform:scaleX(0.879)">VISUALIZATIONS</div>
<svg class="abs" style="left:974px;top:100px" width="10" height="12" viewBox="0 0 10 12"><path d="M2.6 1.6 L7.8 6.2 L2.6 10.8" fill="none" stroke="#a9adb3" stroke-width="1"/></svg>
<div class="abs" style="left:834.0px;top:219.2px;width:157.6px;height:29.0px;background:#1f1f1f;"></div>
<div class="abs" style="left:874.7px;top:245.8px;width:27.3px;height:1.8px;background:#f2c811;"></div>
<div class="abs" style="left:838.0px;top:250.8px;width:150.7px;height:22.2px;background:#1f1f1f;border:1px dotted #0c0c0c"></div>
<svg class="abs" style="left:845px;top:254px" width="16" height="16" viewBox="0 0 16 16"><circle cx="9.6" cy="5.8" r="3.6" fill="none" stroke="#b9b9b9" stroke-width="1.1"/><path d="M7 8.6 L2 13.4" stroke="#b9b9b9" stroke-width="1.2"/></svg>
<div class="t" style="left:865.3px;top:257.8px;font-size:9.8px;letter-spacing:-0.43px;color:#b4b4b4;font-family:'Liberation Sans',sans-serif;">Search</div>
<svg class="abs" style="left:841.0px;top:275.0px" width="11" height="8" viewBox="0 0 11 8"><path d="M1.2 1.4 L5.4 5.8 L9.6 1.4" fill="none" stroke="#e8e8e8" stroke-width="1.1"/></svg>
<div class="t" style="left:855.8px;top:274.0px;font-size:9.6px;letter-spacing:-0.53px;color:#f0f0f0;font-family:'Liberation Sans',sans-serif;">Y-Axis</div>
<div class="t" style="left:936.7px;top:274.0px;font-size:9.6px;letter-spacing:-0.81px;color:#f0f0f0;font-family:'Liberation Sans',sans-serif;">On</div>
<div class="abs" style="left:960.0px;top:279.0px;width:12.0px;height:1.6px;background:#fff;"></div>
<div class="abs" style="left:971.4px;top:274.6px;width:10.8px;height:10.8px;background:#fff;border-radius:50%"></div>
<div class="abs" style="left:838.0px;top:273.0px;width:150.0px;height:4.4px;background:#454343;"></div>
<div class="abs" style="left:987.5px;top:335.8px;width:4.2px;height:195.5px;background:#757373;"></div>
<div class="abs" style="left:836.3px;top:289.2px;width:159.7px;height:2.4px;background:#f7e40b;"></div>
<div class="abs" style="left:836.3px;top:289.2px;width:2.3px;height:201.4px;background:#f7e40b;"></div>
<div class="abs" style="left:836.3px;top:488.2px;width:159.7px;height:2.4px;background:#f7e40b;"></div>
<svg class="abs" style="left:841.0px;top:302.6px" width="11" height="8" viewBox="0 0 11 8"><path d="M1.2 5.8 L5.4 1.4 L9.6 5.8" fill="none" stroke="#e8e8e8" stroke-width="1.1"/></svg>
<div class="t" style="left:855.8px;top:301.8px;font-size:9.8px;letter-spacing:-0.41px;color:#fff;font-family:'Liberation Sans',sans-serif;">Data colors</div>
<div class="abs" style="left:838.6px;top:318.4px;width:149.0px;height:1.0px;background:transparent;border-top:1px dotted #2b2a2a"></div>
<div class="t" style="left:841.7px;top:328.9px;font-size:9.8px;letter-spacing:-0.15px;color:#fff;font-family:'Liberation Sans',sans-serif;">Profit</div>
<div class="abs" style="left:946.3px;top:324.4px;width:34.5px;height:18.6px;background:#3a3838;border:1px dotted #2c2b2b"></div>
<div class="abs" style="left:950.8px;top:329.4px;width:9.2px;height:8.6px;background:#b5403f;"></div>
<div class="abs" style="left:965px;top:332.6px;width:0;height:0;border-left:2.4px solid transparent;border-right:2.4px solid transparent;border-top:3px solid #c9c9c9"></div>
<div class="t" style="left:841.7px;top:356.8px;font-size:9.8px;letter-spacing:-0.56px;color:#fff;font-family:'Liberation Sans',sans-serif;">Consumer</div>
<div class="abs" style="left:946.3px;top:352.3px;width:34.5px;height:18.6px;background:#3a3838;border:1px dotted #2c2b2b"></div>
<div class="abs" style="left:950.8px;top:357.3px;width:9.2px;height:8.6px;background:#12b8ae;"></div>
<div class="abs" style="left:965px;top:360.5px;width:0;height:0;border-left:2.4px solid transparent;border-right:2.4px solid transparent;border-top:3px solid #c9c9c9"></div>
<div class="t" style="left:841.7px;top:384.6px;font-size:9.8px;letter-spacing:-0.35px;color:#fff;font-family:'Liberation Sans',sans-serif;">Corporate</div>
<div class="abs" style="left:946.3px;top:380.1px;width:34.5px;height:18.6px;background:#3a3838;border:1px dotted #2c2b2b"></div>
<div class="abs" style="left:950.8px;top:385.1px;width:9.2px;height:8.6px;background:#3a484b;"></div>
<div class="abs" style="left:965px;top:388.3px;width:0;height:0;border-left:2.4px solid transparent;border-right:2.4px solid transparent;border-top:3px solid #c9c9c9"></div>
<div class="t" style="left:841.7px;top:412.0px;font-size:9.8px;letter-spacing:-0.30px;color:#fff;font-family:'Liberation Sans',sans-serif;">Home Office</div>
<div class="abs" style="left:946.3px;top:407.5px;width:34.5px;height:18.6px;background:#3a3838;border:1px dotted #2c2b2b"></div>
<div class="abs" style="left:950.8px;top:412.5px;width:9.2px;height:8.6px;background:#c96f4e;"></div>
<div class="abs" style="left:965px;top:415.7px;width:0;height:0;border-left:2.4px solid transparent;border-right:2.4px solid transparent;border-top:3px solid #c9c9c9"></div>
<div class="t" style="left:841.7px;top:439.9px;font-size:9.8px;letter-spacing:-0.61px;color:#fff;font-family:'Liberation Sans',sans-serif;">Small Business</div>
<div class="abs" style="left:946.3px;top:435.4px;width:34.5px;height:18.6px;background:#3a3838;border:1px dotted #2c2b2b"></div>
<div class="abs" style="left:950.8px;top:440.4px;width:9.2px;height:8.6px;background:#f5c540;"></div>
<div class="abs" style="left:965px;top:443.6px;width:0;height:0;border-left:2.4px solid transparent;border-right:2.4px solid transparent;border-top:3px solid #c9c9c9"></div>
<div class="t" style="left:841.7px;top:470.4px;font-size:9.8px;letter-spacing:-0.30px;color:#e3a24e;font-family:'Liberation Sans',sans-serif;">Revert to default</div>
<svg class="abs" style="left:841.0px;top:498.4px" width="11" height="8" viewBox="0 0 11 8"><path d="M1.2 1.4 L5.4 5.8 L9.6 1.4" fill="none" stroke="#e8e8e8" stroke-width="1.1"/></svg>
<div class="t" style="left:855.8px;top:497.5px;font-size:9.8px;letter-spacing:-0.48px;color:#f4f4f4;font-family:'Liberation Sans',sans-serif;">Data labels</div>
<div class="t" style="left:936.7px;top:497.5px;font-size:9.8px;letter-spacing:0.05px;color:#f4f4f4;font-family:'Liberation Sans',sans-serif;">Off</div>
<div class="abs" style="left:969.6px;top:502.0px;width:13.0px;height:1.5px;background:#fff;"></div>
<div class="abs" style="left:959.8px;top:497.5px;width:10.6px;height:10.6px;background:#454343;border-radius:50%;border:1.3px solid #fff"></div>
<div class="abs" style="left:838.0px;top:515.0px;width:150.0px;height:1.4px;background:#2f2d2d;"></div>
<svg class="abs" style="left:841.0px;top:526.2px" width="11" height="8" viewBox="0 0 11 8"><path d="M1.2 1.4 L5.4 5.8 L9.6 1.4" fill="none" stroke="#e8e8e8" stroke-width="1.1"/></svg>
<div class="t" style="left:855.8px;top:525.3px;font-size:9.8px;letter-spacing:-0.97px;color:#f4f4f4;font-family:'Liberation Sans',sans-serif;">Shapes</div>
<div class="abs" style="left:838.0px;top:542.3px;width:150.0px;height:1.4px;background:#2f2d2d;"></div>
<svg class="abs" style="left:841.0px;top:553.4px" width="11" height="8" viewBox="0 0 11 8"><path d="M1.2 1.4 L5.4 5.8 L9.6 1.4" fill="none" stroke="#e8e8e8" stroke-width="1.1"/></svg>
<div class="t" style="left:855.8px;top:552.5px;font-size:9.8px;letter-spacing:-0.38px;color:#f4f4f4;font-family:'Liberation Sans',sans-serif;">Plot Area</div>
<svg class="abs" style="left:834px;top:219px" width="162" height="30" viewBox="834 219 162 30"><rect x="850.2" y="227.2" width="15" height="5.6" fill="none" stroke="#e6e6e6" stroke-width="0.9" stroke-dasharray="1.2 0.8"/><rect x="850.2" y="235" width="15" height="5.6" fill="none" stroke="#e6e6e6" stroke-width="0.9" stroke-dasharray="1.2 0.8"/><path d="M850.2 226 h9" stroke="#e6e6e6" stroke-width="0.8"/><rect x="881.4" y="226.4" width="11" height="4" rx="1.6" fill="none" stroke="#f2f2f2" stroke-width="1"/><path d="M892.4 228.4 h2.4 v4.6 h-6.6 v2.4" fill="none" stroke="#f2f2f2" stroke-width="0.9"/><rect x="886.4" y="235.4" width="3.4" height="6" rx="0.8" fill="none" stroke="#f2f2f2" stroke-width="0.9"/><circle cx="917.4" cy="232.6" r="6.2" fill="none" stroke="#e6e6e6" stroke-width="1"/><path d="M922 237.2 L926.4 241.6" stroke="#e6e6e6" stroke-width="1.2"/><path d="M913 233.4 l2.6 -2.2 l2 1.6 l3.6 -3" fill="none" stroke="#e6e6e6" stroke-width="0.8"/><path d="M914.6 235 v3 M916.6 234.4 v4 M918.6 235 v3.4 M920.4 234 v3" stroke="#e6e6e6" stroke-width="0.8"/></svg>
<svg class="abs" style="left:834px;top:124px" width="162" height="96" viewBox="834 124 162 96">
<path d="M841 128.7 v13.6 h14" fill="none" stroke="#8a8a8a" stroke-width="0.7"/>
<rect x="842.0" y="130.7" width="4.0" height="3.6" fill="#7fa6cc"/>
<rect x="846.0" y="130.7" width="5.6" height="3.6" fill="#e3a64a"/>
<rect x="842.0" y="136.3" width="6.0" height="3.6" fill="#7fa6cc"/>
<rect x="848.0" y="136.3" width="6.4" height="3.6" fill="#e3a64a"/>
<path d="M862.7 128.7 v13.6 h14" fill="none" stroke="#8a8a8a" stroke-width="0.7"/>
<rect x="865.3" y="136.7" width="3.6" height="5.4" fill="#7fa6cc"/>
<rect x="865.3" y="132.3" width="3.6" height="4.4" fill="#e3a64a"/>
<rect x="871.1" y="134.7" width="3.6" height="7.4" fill="#7fa6cc"/>
<rect x="871.1" y="129.3" width="3.6" height="5.4" fill="#e3a64a"/>
<path d="M884.3 128.7 v13.6 h14" fill="none" stroke="#8a8a8a" stroke-width="0.7"/>
<rect x="885.3" y="130.1" width="6.6" height="2.2" fill="#e3a64a"/>
<rect x="885.3" y="132.5" width="12.4" height="2.2" fill="#7fa6cc"/>
<rect x="885.3" y="136.7" width="9.4" height="2.2" fill="#e3a64a"/>
<rect x="885.3" y="139.1" width="6.0" height="2.2" fill="#7fa6cc"/>
<path d="M905.8 128.7 v13.6 h14" fill="none" stroke="#8a8a8a" stroke-width="0.7"/>
<rect x="907.2" y="134.7" width="2.4" height="7.4" fill="#e3a64a"/>
<rect x="909.8" y="129.3" width="2.4" height="12.8" fill="#7fa6cc"/>
<rect x="913.6" y="131.7" width="2.4" height="10.4" fill="#e3a64a"/>
<rect x="916.2" y="135.1" width="2.4" height="7.0" fill="#7fa6cc"/>
<path d="M927.2 128.7 v13.6 h14" fill="none" stroke="#8a8a8a" stroke-width="0.7"/>
<rect x="928.2" y="130.7" width="12.4" height="3.6" fill="#7fa6cc"/>
<rect x="928.2" y="130.7" width="4.0" height="3.6" fill="#5b89ad"/>
<rect x="928.2" y="136.3" width="12.4" height="3.6" fill="#7fa6cc"/>
<rect x="928.2" y="136.3" width="6.0" height="3.6" fill="#5b89ad"/>
<path d="M948.8 128.7 v13.6 h14" fill="none" stroke="#8a8a8a" stroke-width="0.7"/>
<rect x="951.2" y="129.3" width="4.0" height="12.8" fill="#7fa6cc"/>
<rect x="951.2" y="137.3" width="4.0" height="4.8" fill="#5b89ad"/>
<rect x="957.2" y="129.3" width="4.0" height="12.8" fill="#7fa6cc"/>
<rect x="957.2" y="135.3" width="4.0" height="6.8" fill="#5b89ad"/>
<path d="M970.5 128.7 v13.6 h14" fill="none" stroke="#8a8a8a" stroke-width="0.7"/>
<path d="M971.5 138.7 l4 -4.6 l3 2.4 l5 -6" fill="none" stroke="#5b89ad" stroke-width="0.9"/><path d="M971.5 135.7 l4 1.6 l4 -3.6 l4 -1" fill="none" stroke="#e3a64a" stroke-width="0.9"/>
<path d="M841 146.7 v13.6 h14" fill="none" stroke="#8a8a8a" stroke-width="0.7"/>
<path d="M842 159.7 v-6 l4 -3 l3.6 3 l4.6 -5 v11z" fill="#e3a64a"/><path d="M842 159.7 v-3 l4 -2 l4 2.4 l4.2 -2 v4.6z" fill="#7fa6cc"/>
<path d="M862.7 146.7 v13.6 h14" fill="none" stroke="#8a8a8a" stroke-width="0.7"/>
<path d="M863.7 159.7 v-8 l3 -3 l3 3.4 l3 -3.6 l3.2 3 v8.2z" fill="#e3a64a"/><path d="M863.7 159.7 v-3.4 l3 -2 l3 2.4 l3 -2.4 l3.2 2 v3.4z" fill="#5b89ad"/>
<rect x="883.6" y="145.9" width="16" height="15.6" fill="#1a1a1a" stroke="#f2c544" stroke-width="1.2"/>
<rect x="886.9" y="151.1" width="3.4" height="9.0" fill="#555"/>
<rect x="892.5" y="149.1" width="3.4" height="11.0" fill="#555"/>
<path d="M905.8 146.7 v13.6 h14" fill="none" stroke="#8a8a8a" stroke-width="0.7"/>
<rect x="907.2" y="151.7" width="2.4" height="8.4" fill="#e3a64a"/>
<rect x="909.8" y="148.3" width="2.4" height="11.8" fill="#7fa6cc"/>
<rect x="913.6" y="150.7" width="2.4" height="9.4" fill="#e3a64a"/>
<rect x="916.2" y="153.1" width="2.4" height="7.0" fill="#7fa6cc"/>
<path d="M906.8 154.7 l4 -3 l4 3 l4.6 -6" fill="none" stroke="#c4553d" stroke-width="0.8"/><path d="M919.4 146.7 v13.6" stroke="#e3a64a" stroke-width="0.7"/>
<path d="M927.2 146.7 v13.6 h14" fill="none" stroke="#8a8a8a" stroke-width="0.7"/>
<rect x="929.2" y="154.3" width="3.0" height="5.8" fill="#7fa6cc"/>
<rect x="929.2" y="151.3" width="3.0" height="3.0" fill="#e3a64a"/>
<rect x="933.2" y="153.3" width="3.0" height="6.8" fill="#7fa6cc"/>
<rect x="933.2" y="149.7" width="3.0" height="3.6" fill="#e3a64a"/>
<rect x="937.2" y="152.3" width="3.0" height="7.8" fill="#7fa6cc"/>
<rect x="937.2" y="147.9" width="3.0" height="4.4" fill="#e3a64a"/>
<path d="M948.8 146.7 v13.6 h14" fill="none" stroke="#8a8a8a" stroke-width="0.7"/>
<path d="M951.1999999999999 159.7 v-9 h3 v6 h2.6 v-9 h3.4 v12" fill="none" stroke="#c8c8c8" stroke-width="0.9"/><path d="M954.4 151.7 v5.4 h2.4" fill="none" stroke="#c4553d" stroke-width="0.9"/>
<path d="M970.5 146.7 v13.6 h14" fill="none" stroke="#8a8a8a" stroke-width="0.7"/>
<circle cx="974.5" cy="149.7" r="0.9" fill="#c4553d"/>
<circle cx="978.5" cy="152.7" r="1.1" fill="#7fa6cc"/>
<circle cx="981.5" cy="150.1" r="0.9" fill="#7fa6cc"/>
<circle cx="975.9" cy="156.29999999999998" r="1" fill="#e3a64a"/>
<circle cx="981.1" cy="155.7" r="1.2" fill="#5b89ad"/>
<circle cx="973.1" cy="153.7" r="0.8" fill="#7fa6cc"/>
<circle cx="848" cy="172" r="6.8" fill="#7fa6cc"/><path d="M848 172 L848 165.2 A6.8 6.8 0 0 0 841.4 173.4z" fill="#f0d2a8"/><path d="M848 172 L841.4 173.4 A6.8 6.8 0 0 0 845 178.2z" fill="#e3a64a"/>
<circle cx="869.7" cy="172" r="5.4" fill="none" stroke="#5b89ad" stroke-width="2.8"/><path d="M870.7 166.7 A5.4 5.4 0 0 1 875.0 171" fill="none" stroke="#e3a64a" stroke-width="2.8"/>
<rect x="884.6999999999999" y="165.4" width="13.2" height="13.2" fill="#f4f4f4"/><path d="M888.9 165.4 v7.6 M884.6999999999999 173 h13.2 M893.3 165.4 v7.6 M884.6999999999999 169 h4.2 M891.3 173 v5.6" stroke="#777" stroke-width="0.7"/>
<circle cx="912.8" cy="172" r="6.6" fill="#f4f4f4" stroke="#7fa6cc" stroke-width="0.9"/><ellipse cx="912.8" cy="172" rx="3" ry="6.6" fill="none" stroke="#7fa6cc" stroke-width="0.8"/><path d="M906.1999999999999 172 h13.2 M907.1999999999999 168.6 h11.2 M907.1999999999999 175.4 h11.2" stroke="#7fa6cc" stroke-width="0.8"/>
<path d="M927.6 166.6 h10 l2.6 -1 l0.6 4 l-2 3.6 l-1 4 l-2.6 -1 l-2.4 2 l-1.2 -3 l-3.4 -1.4z" fill="#e9eef4" stroke="#999" stroke-width="0.5"/><rect x="929.2" y="169.6" width="4" height="3" fill="#5b89ad"/><rect x="934.6" y="172.4" width="3.6" height="2.6" fill="#7fa6cc"/><path d="M939.8000000000001 166 q1.4 3 -0.6 6" stroke="#e3a64a" stroke-width="1.2" fill="none"/>
<rect x="948.8" y="166.4" width="14.0" height="2.4" fill="#7fa6cc"/>
<rect x="950.8" y="169.8" width="10.0" height="2.4" fill="#e3a64a"/>
<rect x="952.4" y="173.2" width="6.8" height="2.4" fill="#7fa6cc"/>
<rect x="954.0" y="176.4" width="3.6" height="2.2" fill="#5b89ad"/>
<path d="M971.5 176 a6 6 0 0 1 12 0" fill="none" stroke="#e3a64a" stroke-width="2.6"/><path d="M980.5 170.8 a6 6 0 0 1 3 5.2" fill="none" stroke="#7fa6cc" stroke-width="2.6"/><path d="M976.5 175.6 l3 -2" stroke="#777" stroke-width="0.8"/>
<rect x="841.4" y="185.79999999999998" width="13.4" height="10" fill="#f4f4f4" stroke="#bbb" stroke-width="0.5"/><text x="842.6" y="192.79999999999998" font-size="6.8" font-family="Liberation Sans" fill="#5b89ad" textLength="11">123</text><path d="M843 194.2 h10" stroke="#999" stroke-width="0.7"/>
<rect x="863.3000000000001" y="184.39999999999998" width="13" height="13.2" fill="#f4f4f4" stroke="#c9b9a9" stroke-width="0.5"/><path d="M865.1 185.2 v11.6" stroke="#888" stroke-width="0.8"/><path d="M868.7 187.2 h4.6 M868.7 189.6 h3.4 M868.7 192.0 h4" stroke="#5b89ad" stroke-width="0.9"/>
<rect x="884.6999999999999" y="186.2" width="13.4" height="9.6" fill="#f4f4f4" stroke="#bbb" stroke-width="0.5"/><path d="M888.3 191.79999999999998 l2 -3.4 l2 3.4z" fill="#5b89ad"/><path d="M892.6999999999999 188.39999999999998 h4 l-2 3.4z" fill="#c4553d"/><path d="M886.6999999999999 193.79999999999998 h9.6" stroke="#999" stroke-width="0.7"/>
<rect x="906.0" y="184.79999999999998" width="12" height="12.4" fill="#f4f4f4"/><rect x="906.0" y="184.79999999999998" width="12" height="1.6" fill="#5b89ad"/><rect x="907.4" y="188.2" width="2" height="2" fill="#7fa6cc"/><rect x="907.4" y="191.2" width="2" height="2" fill="#e3a64a"/><rect x="907.4" y="194.2" width="2" height="2" fill="#e3a64a"/><path d="M914.1999999999999 190.79999999999998 h6.4 l-2.4 3 v3.6 l-1.6 -1 v-2.6z" fill="#999"/>
<rect x="927.8000000000001" y="184.6" width="12.8" height="13" fill="#f4f4f4"/><rect x="927.8000000000001" y="184.6" width="12.8" height="1.6" fill="#7fa6cc"/><path d="M932.0 186.2 v11.4 M936.4000000000001 186.2 v11.4 M927.8000000000001 189.79999999999998 h12.8 M927.8000000000001 193.6 h12.8" stroke="#666" stroke-width="0.8"/>
<rect x="949.4" y="184.6" width="12.8" height="13" fill="#f4f4f4"/><rect x="949.4" y="184.6" width="12.8" height="1.6" fill="#7fa6cc"/><rect x="958.0" y="186.2" width="4.2" height="11.4" fill="#cfdcea"/><rect x="949.4" y="193.6" width="12.8" height="4" fill="#cfdcea"/><path d="M953.5999999999999 186.2 v11.4 M958.0 186.2 v11.4 M949.4 189.79999999999998 h12.8 M949.4 193.6 h12.8" stroke="#666" stroke-width="0.8"/>
<text x="971.9" y="197.39999999999998" font-size="16.6" font-weight="bold" font-family="Liberation Sans" fill="#7fa6cc" textLength="11.4" lengthAdjust="spacingAndGlyphs">R</text>
<rect x="844.4" y="206.8" width="1.6" height="1.6" fill="#f0f0f0"/>
<rect x="848.8" y="206.8" width="1.6" height="1.6" fill="#f0f0f0"/>
<rect x="853.2" y="206.8" width="1.6" height="1.6" fill="#f0f0f0"/>
</svg>
</body></html>
